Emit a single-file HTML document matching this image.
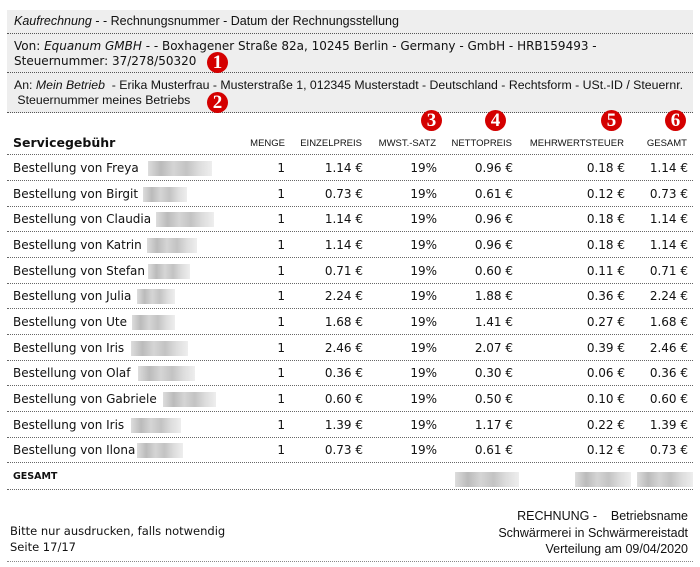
<!DOCTYPE html>
<html><head><meta charset="utf-8"><style>
*{margin:0;padding:0;box-sizing:border-box}
body{width:700px;height:567px;background:#fff;position:relative;overflow:hidden;font-family:"DejaVu Sans","Liberation Sans",sans-serif;color:#111}
.box{position:absolute;left:7px;width:686px;background:#eeeeee;border-bottom:1px dotted #555;font-size:12px;padding-left:7px}
.ls{font-family:"Liberation Sans",sans-serif;font-size:12.5px}
.c{position:absolute;width:21px;height:21px;border-radius:50%;background:#d40000;color:#fff;font-family:"Liberation Serif",serif;font-weight:bold;font-size:19px;line-height:22px;text-align:center}
.row{position:absolute;left:7px;width:686px;height:26px;border-bottom:1px dotted #666;font-size:12px}
.row span{position:absolute;top:6px;white-space:nowrap}
.h span{font-family:"Liberation Sans",sans-serif;font-size:9.5px;top:9px}
.blur{position:absolute;top:5px;height:15px;background:linear-gradient(90deg,#ddd,#bbb 20%,#d5d5d5 40%,#c3c3c3 60%,#ddd 80%,#eee)}
</style></head><body>
<div class="box ls" style="top:10px;height:24px;padding-top:4px"><i>Kaufrechnung</i> - - Rechnungsnummer - Datum der Rechnungsstellung</div>
<div class="box" style="top:34px;height:39px;padding-top:5px;line-height:15px">Von: <i>Equanum GMBH</i> - - Boxhagener Straße 82a, 10245 Berlin - Germany - GmbH - HRB159493 -<br>Steuernummer: 37/278/50320</div>
<div class="box ls" style="top:73px;height:40px;padding-top:5px;line-height:15px;font-size:12.3px">An: <i>Mein Betrieb</i> &nbsp;- Erika Musterfrau - Musterstraße 1, 012345 Musterstadt - Deutschland - Rechtsform - USt.-ID / Steuernr.<br>&nbsp;Steuernummer meines Betriebs</div>
<div class="c" style="left:207px;top:52px">1</div>
<div class="c" style="left:207px;top:92px">2</div>
<div class="c" style="left:421px;top:110px">3</div>
<div class="c" style="left:485px;top:110px">4</div>
<div class="c" style="left:601px;top:110px">5</div>
<div class="c" style="left:665px;top:110px">6</div>

<div class="row h" style="top:129px">
<span style="left:6px;top:6px;font-family:'DejaVu Sans',sans-serif;font-size:12.5px;font-weight:bold">Servicegebühr</span>
<span style="right:408px">MENGE</span><span style="right:331px">EINZELPREIS</span><span style="right:257px">MWST.-SATZ</span><span style="right:181px">NETTOPREIS</span><span style="right:69px">MEHRWERTSTEUER</span><span style="right:6px">GESAMT</span>
</div>
<div id="rows"></div>
<div class="row" style="top:463px;height:27px"><span style="left:6px;font-weight:bold;font-size:9.5px;top:8px">GESAMT</span>
<div class="blur" style="left:448px;width:64px;top:9px"></div><div class="blur" style="left:568px;width:56px;top:9px"></div><div class="blur" style="left:630px;width:56px;top:9px"></div></div>

<div style="position:absolute;left:10px;top:523px;font-size:11.5px;line-height:16px">Bitte nur ausdrucken, falls notwendig<br>Seite 17/17</div>
<div style="position:absolute;right:12px;top:508px;font-family:'Liberation Sans',sans-serif;font-size:12.5px;line-height:16.5px;text-align:right">RECHNUNG - &nbsp;&nbsp;&nbsp;Betriebsname<br>Schwärmerei in Schwärmereistadt<br>Verteilung am 09/04/2020</div>
<div style="position:absolute;left:7px;width:686px;top:561px;border-bottom:1px dotted #888"></div>
<script>
var d=[["Freya",1.14,0.96,0.18,141,64],["Birgit",0.73,0.61,0.12,136,44],["Claudia",1.14,0.96,0.18,149,58],["Katrin",1.14,0.96,0.18,140,50],["Stefan",0.71,0.60,0.11,141,42],["Julia",2.24,1.88,0.36,130,38],["Ute",1.68,1.41,0.27,125,43],["Iris",2.46,2.07,0.39,124,57],["Olaf",0.36,0.30,0.06,131,57],["Gabriele",0.60,0.50,0.10,156,53],["Iris",1.39,1.17,0.22,124,50],["Ilona",0.73,0.61,0.12,130,46]];
var h="";
d.forEach(function(r,i){var t=155+i*25.67;var f=function(x){return x.toFixed(2)+" €"};
h+='<div class="row" style="top:'+t+'px"><span style="left:6px">Bestellung von '+r[0]+'</span><div class="blur" style="left:'+r[4]+'px;width:'+r[5]+'px;top:6px"></div><span style="right:408px">1</span><span style="right:330px">'+f(r[1])+'</span><span style="right:256px">19%</span><span style="right:180px">'+f(r[2])+'</span><span style="right:68px">'+f(r[3])+'</span><span style="right:5px">'+f(r[1])+'</span></div>';});
document.getElementById("rows").outerHTML=h;
</script>
</body></html>
